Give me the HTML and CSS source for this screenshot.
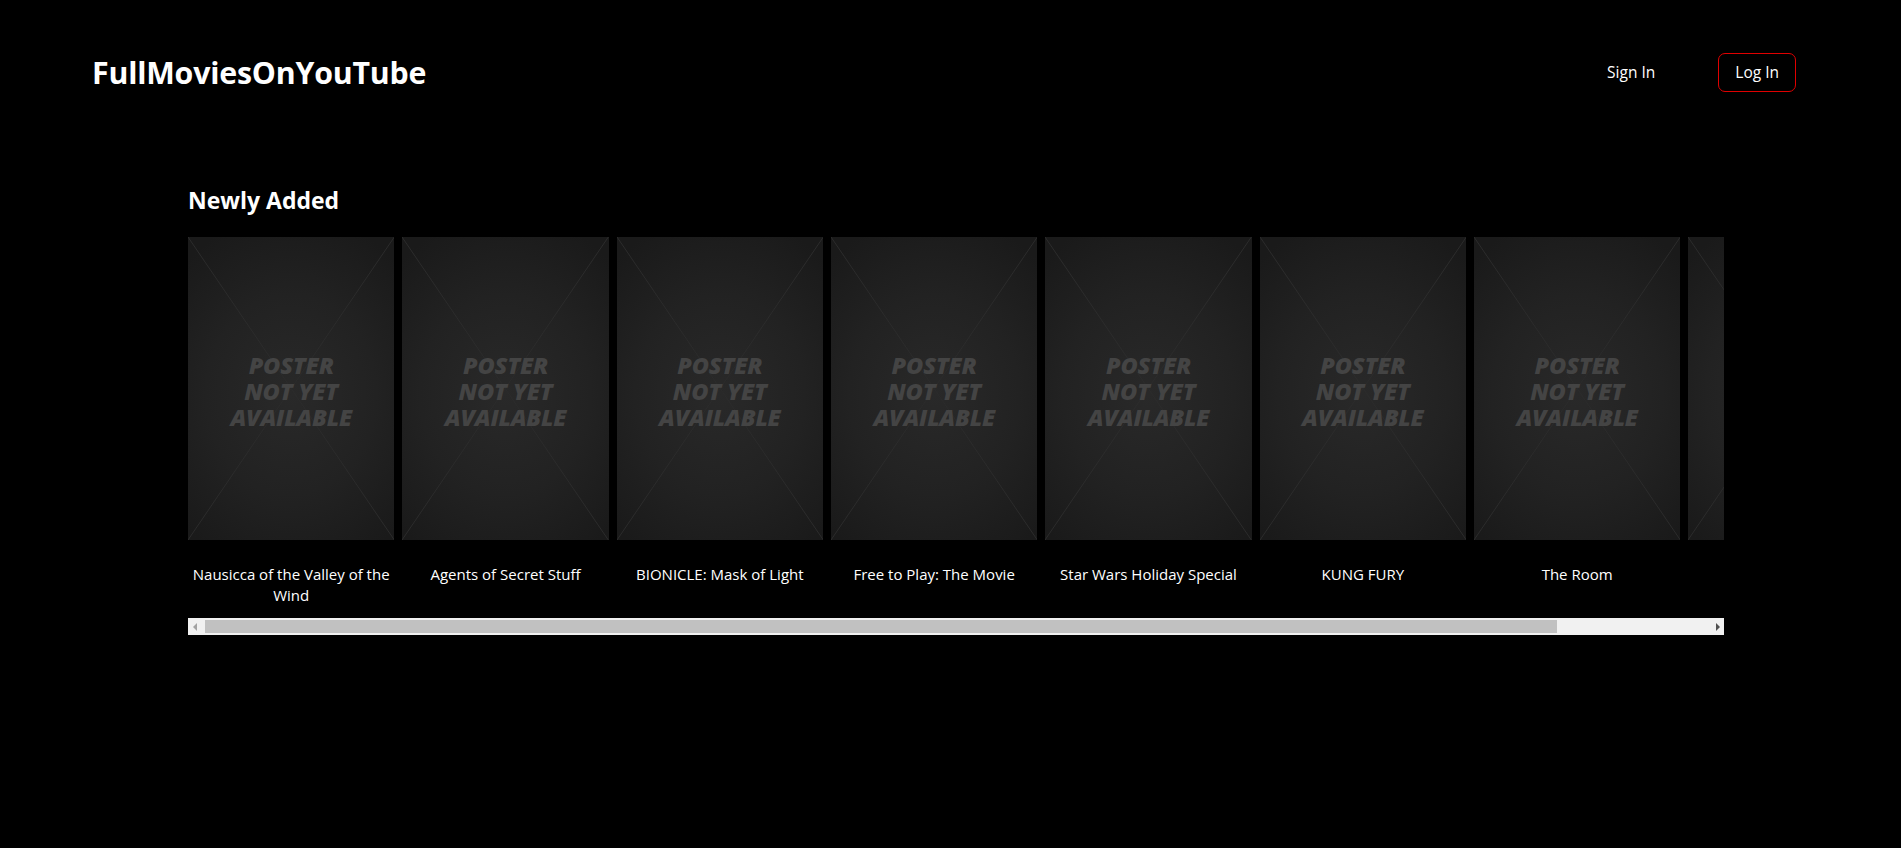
FILE: index.html
```html
<!DOCTYPE html>
<html lang="en">
<head>
<meta charset="utf-8">
<title>FullMoviesOnYouTube</title>
<link rel="stylesheet" href="styles.css">
</head>
<body>
<header class="site-header">
  <a class="logo" href="#">FullMoviesOnYouTube</a>
  <nav class="auth">
    <a class="auth-link" href="#">Sign In</a>
    <a class="auth-link auth-login" href="#">Log In</a>
  </nav>
</header>
<main class="content">
  <section class="shelf">
    <h2 class="shelf-title">Newly Added</h2>
    <div class="viewport">
      <div class="row">
        <a class="card" href="#">
          <div class="poster">
            <svg class="poster-x" viewBox="0 0 100 100" preserveAspectRatio="none"><path d="M0 0L100 100M100 0L0 100"/></svg>
            <span class="poster-text"><span class="pl">POSTER</span><span class="pl">NOT YET</span><span class="pl">AVAILABLE</span></span>
          </div>
          <p class="card-title">Nausicca of the Valley of the Wind</p>
        </a>
        <a class="card" href="#">
          <div class="poster">
            <svg class="poster-x" viewBox="0 0 100 100" preserveAspectRatio="none"><path d="M0 0L100 100M100 0L0 100"/></svg>
            <span class="poster-text"><span class="pl">POSTER</span><span class="pl">NOT YET</span><span class="pl">AVAILABLE</span></span>
          </div>
          <p class="card-title">Agents of Secret Stuff</p>
        </a>
        <a class="card" href="#">
          <div class="poster">
            <svg class="poster-x" viewBox="0 0 100 100" preserveAspectRatio="none"><path d="M0 0L100 100M100 0L0 100"/></svg>
            <span class="poster-text"><span class="pl">POSTER</span><span class="pl">NOT YET</span><span class="pl">AVAILABLE</span></span>
          </div>
          <p class="card-title">BIONICLE: Mask of Light</p>
        </a>
        <a class="card" href="#">
          <div class="poster">
            <svg class="poster-x" viewBox="0 0 100 100" preserveAspectRatio="none"><path d="M0 0L100 100M100 0L0 100"/></svg>
            <span class="poster-text"><span class="pl">POSTER</span><span class="pl">NOT YET</span><span class="pl">AVAILABLE</span></span>
          </div>
          <p class="card-title">Free to Play: The Movie</p>
        </a>
        <a class="card" href="#">
          <div class="poster">
            <svg class="poster-x" viewBox="0 0 100 100" preserveAspectRatio="none"><path d="M0 0L100 100M100 0L0 100"/></svg>
            <span class="poster-text"><span class="pl">POSTER</span><span class="pl">NOT YET</span><span class="pl">AVAILABLE</span></span>
          </div>
          <p class="card-title">Star Wars Holiday Special</p>
        </a>
        <a class="card" href="#">
          <div class="poster">
            <svg class="poster-x" viewBox="0 0 100 100" preserveAspectRatio="none"><path d="M0 0L100 100M100 0L0 100"/></svg>
            <span class="poster-text"><span class="pl">POSTER</span><span class="pl">NOT YET</span><span class="pl">AVAILABLE</span></span>
          </div>
          <p class="card-title">KUNG FURY</p>
        </a>
        <a class="card" href="#">
          <div class="poster">
            <svg class="poster-x" viewBox="0 0 100 100" preserveAspectRatio="none"><path d="M0 0L100 100M100 0L0 100"/></svg>
            <span class="poster-text"><span class="pl">POSTER</span><span class="pl">NOT YET</span><span class="pl">AVAILABLE</span></span>
          </div>
          <p class="card-title">The Room</p>
        </a>
        <a class="card card-peek" href="#">
          <div class="poster">
            <svg class="poster-x" viewBox="0 0 100 100" preserveAspectRatio="none"><path d="M0 0L100 100M100 0L0 100"/></svg>
          </div>
        </a>
      </div>
    </div>
    <div class="scrollbar" aria-hidden="true">
      <span class="sb-btn sb-left"></span>
      <div class="sb-track"><span class="sb-thumb"></span></div>
      <span class="sb-btn sb-right"></span>
    </div>
  </section>
</main>
</body>
</html>
```
FILE: styles.css
```css
html, body {
  margin: 0;
  padding: 0;
  background: #000;
  color: #fff;
  font-family: "Open Sans", "Noto Sans", sans-serif;
}

a {
  color: inherit;
  text-decoration: none;
}

.site-header {
  height: 144px;
  display: flex;
  align-items: center;
  justify-content: space-between;
  padding: 0 105px 0 92px;
}

.logo {
  font-size: 30.3px;
  font-weight: 700;
  letter-spacing: -0.2px;
}

.auth {
  display: flex;
  align-items: center;
  gap: 46px;
}

.auth-link {
  display: flex;
  align-items: center;
  height: 37px;
  padding: 0 16px;
  border: 1px solid transparent;
  border-radius: 7px;
  font-size: 15.5px;
}

.auth-login {
  border-color: #e00000;
}

.content {
  padding: 40px 177px 0 188px;
}

.shelf-title {
  margin: 0 0 21px;
  font-size: 23px;
  line-height: 32px;
  font-weight: 700;
}

.viewport {
  overflow: hidden;
}

.row {
  display: flex;
  gap: 8px;
}

.card {
  flex: 0 0 206.33px;
  display: flex;
  flex-direction: column;
}

.poster {
  position: relative;
  height: 303px;
  display: flex;
  align-items: center;
  justify-content: center;
  background: radial-gradient(ellipse 75% 60% at 50% 52%, #292929 0%, #222 55%, #1a1a1a 100%);
  overflow: hidden;
}

.poster-x {
  position: absolute;
  inset: 0;
  width: 100%;
  height: 100%;
}

.poster-x path {
  stroke: #2c2c2c;
  stroke-width: 1;
  fill: none;
  vector-effect: non-scaling-stroke;
}

.poster-text {
  position: relative;
  margin-top: 5px;
  display: flex;
  flex-direction: column;
  align-items: center;
  gap: 0;
  font-weight: 800;
  font-style: italic;
  color: #444;
  letter-spacing: -0.2px;
}

.pl {
  display: block;
  height: 26px;
  font-size: 23.5px;
  line-height: 26px;
  white-space: nowrap;
}

.card-title {
  margin: 24px 0 0;
  font-size: 15px;
  line-height: 20.5px;
  text-align: center;
}

.scrollbar {
  display: flex;
  height: 17px;
  margin-top: 13px;
  background: #f1f1f1;
}

.sb-btn {
  position: relative;
  flex: 0 0 17px;
}

.sb-left::after,
.sb-right::after {
  content: "";
  position: absolute;
  top: 5px;
  width: 0;
  height: 0;
  border-top: 4px solid transparent;
  border-bottom: 4px solid transparent;
}

.sb-left::after {
  left: 5px;
  border-right: 4px solid #a3a3a3;
}

.sb-right::after {
  left: 9px;
  border-left: 4px solid #505050;
}

.sb-track {
  flex: 1;
  padding: 2px 0;
}

.sb-thumb {
  display: block;
  width: 90%;
  height: 13px;
  background: #c1c1c1;
}
```
